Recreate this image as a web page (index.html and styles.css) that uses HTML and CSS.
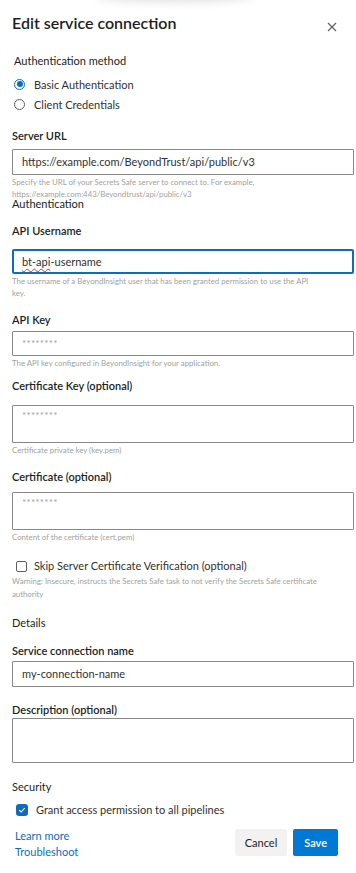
FILE: index.html
```html
<!DOCTYPE html>
<html lang="en">
<head>
    <meta charset="UTF-8">
    <meta name="viewport" content="width=device-width, initial-scale=1.0">
    <title>Edit service connection</title>
    <link rel="stylesheet" href="styles.css">
</head>
<body>
    <div class="shade"></div>
    <div class="panel">
        <div class="header">
            <h1>Edit service connection</h1>
            <span class="close" aria-label="Close">
                <svg width="10" height="10" viewBox="0 0 10 10"><path d="M1 1L9 9M9 1L1 9" stroke="#605e5c" stroke-width="1.1" fill="none"/></svg>
            </span>
        </div>

        <div class="method">
            <div class="method-title">Authentication method</div>
            <label class="radio-row"><span class="radio checked"></span>Basic Authentication</label>
            <label class="radio-row"><span class="radio"></span>Client Credentials</label>
        </div>

        <div class="field field-url">
            <div class="label">Server URL</div>
            <div class="input">https://example.com/BeyondTrust/api/public/v3</div>
            <div class="help">Specify the URL of your Secrets Safe server to connect to. For example,<br>https://example.com:443/Beyondtrust/api/public/v3</div>
        </div>
        <div class="group-title tight">Authentication</div>

        <div class="field field-user">
            <div class="label">API Username</div>
            <div class="input focused"><span class="spell">bt-api</span>-username</div>
            <div class="help">The username of a BeyondInsight user that has been granted permission to use the API<br>key.</div>
        </div>

        <div class="field field-key">
            <div class="label">API Key</div>
            <div class="input short placeholder">********</div>
            <div class="help">The API key configured in BeyondInsight for your application.</div>
        </div>

        <div class="field field-certkey">
            <div class="label">Certificate Key (optional)</div>
            <div class="textarea placeholder">********</div>
            <div class="help">Certificate private key (key.pem)</div>
        </div>

        <div class="field field-cert">
            <div class="label">Certificate (optional)</div>
            <div class="textarea placeholder">********</div>
            <div class="help">Content of the certificate (cert.pem)</div>
        </div>

        <div class="check-field">
            <label class="check-row"><span class="checkbox"></span>Skip Server Certificate Verification (optional)</label>
            <div class="help">Warning: Insecure, instructs the Secrets Safe task to not verify the Secrets Safe certificate<br>authority</div>
        </div>

        <div class="group-title details">Details</div>

        <div class="field field-name">
            <div class="label">Service connection name</div>
            <div class="input">my-connection-name</div>
        </div>

        <div class="field field-desc">
            <div class="label">Description (optional)</div>
            <div class="textarea tall"></div>
        </div>

        <div class="group-title security">Security</div>
        <label class="check-row grant">
            <span class="checkbox checked">
                <svg width="8" height="8" viewBox="0 0 8 8"><path d="M1.2 4.2L3.1 6L6.8 2" stroke="#fff" stroke-width="1.1" fill="none"/></svg>
            </span>
            Grant access permission to all pipelines
        </label>

        <div class="footer">
            <div class="links">
                <a href="#">Learn more</a>
                <a href="#">Troubleshoot</a>
            </div>
            <div class="buttons">
                <button class="btn">Cancel</button>
                <button class="btn primary">Save</button>
            </div>
        </div>
    </div>
</body>
</html>
```

FILE: styles.css
```css
body {
    margin: 0;
    background: #fff;
    font-family: 'Segoe UI', Lato, sans-serif;
    color: #201f1e;
    font-size: 11px;
    overflow: hidden;
}

/* faint shadow of the element above the panel */
.shade {
    position: absolute;
    top: -12px;
    left: 95px;
    width: 160px;
    height: 12px;
    border-radius: 50%;
    box-shadow: 0 2px 10px rgba(0, 0, 0, 0.12);
}

.panel {
    width: 342px;
    padding: 12px 0 0 12px;
}

.header {
    display: flex;
    justify-content: space-between;
    align-items: flex-start;
}

h1 {
    margin: 0;
    font-size: 16px;
    font-weight: 600;
    line-height: 22px;
}

.close {
    display: flex;
    margin: 10px 17px 0 0;
}

.method {
    margin: 19px 0 0 2px;
}

.method-title {
    font-size: 11px;
    line-height: 16px;
    margin-bottom: 5px;
}

.radio-row {
    display: flex;
    align-items: center;
    height: 20px;
    font-size: 11px;
    color: #323130;
}

.radio {
    width: 11px;
    height: 11px;
    box-sizing: border-box;
    border: 1px solid #605e5c;
    border-radius: 50%;
    margin: 0 9px 0 0;
    position: relative;
}

.radio.checked {
    border-color: #0f6cbd;
}

.radio.checked::after {
    content: '';
    position: absolute;
    left: 1.5px;
    top: 1.5px;
    width: 6px;
    height: 6px;
    border-radius: 50%;
    background: #0f6cbd;
}

.label {
    font-size: 11px;
    font-weight: 600;
    line-height: 16px;
    margin-bottom: 5px;
}

.field-url { margin-top: 14px; }
.field-user { margin-top: 12px; }
.field-key { margin-top: 13px; }
.field-certkey { margin-top: 9px; }
.field-cert { margin-top: 13px; }
.field-name { margin-top: 12px; }
.field-desc { margin-top: 15px; }

.field-user .label { margin-bottom: 10px; }
.field-key .label { margin-bottom: 3px; }
.field-certkey .label { margin-bottom: 11px; }
.field-cert .label { margin-bottom: 7px; }
.field-name .label { margin-bottom: 2px; }
.field-desc .label { margin-bottom: 0; }

.input,
.textarea {
    box-sizing: border-box;
    border: 1px solid #8a8886;
    border-radius: 1px;
    padding: 0 9px;
    font-size: 11px;
    color: #323130;
}

.input {
    height: 26px;
    line-height: 24px;
}

.input.short {
    height: 25px;
    line-height: 23px;
}

.input.focused {
    height: 25px;
    border: 2px solid #0f6cbd;
    border-radius: 2px;
    padding: 0 8px;
    line-height: 21px;
}

.spell {
    text-decoration: underline wavy #e0301e;
    text-decoration-thickness: 1px;
    text-underline-offset: 2px;
}

.textarea {
    height: 38px;
    padding-top: 3px;
}

.textarea.tall {
    height: 45px;
}

.placeholder {
    color: #a19f9d;
    font-size: 10px;
    letter-spacing: 0.2px;
}

.help {
    font-size: 7.8px;
    line-height: 12px;
    color: #a19f9d;
    margin-top: 1px;
}

.group-title {
    font-size: 11px;
    line-height: 16px;
}

.group-title.tight {
    line-height: 14px;
    margin-top: -3px;
}

.check-field {
    margin-top: 14px;
}

.check-row {
    display: flex;
    align-items: center;
    font-size: 11px;
    line-height: 18px;
    color: #323130;
}

.checkbox {
    width: 11px;
    height: 11px;
    box-sizing: border-box;
    border: 1px solid #605e5c;
    border-radius: 2px;
    margin: 0 7px 0 4px;
    display: flex;
    align-items: center;
    justify-content: center;
}

.checkbox.checked {
    width: 12px;
    height: 12px;
    border: none;
    background: #0f6cbd;
    border-radius: 3px;
    margin-right: 8px;
}

.check-field .help {
    line-height: 13px;
    margin-top: 0;
}

.group-title.details {
    margin-top: 14px;
}

.group-title.security {
    margin-top: 16px;
}

.grant {
    margin-top: 6px;
}

.footer {
    display: flex;
    justify-content: space-between;
    align-items: flex-start;
    margin-top: 9px;
    padding-right: 16px;
}

.links {
    display: flex;
    flex-direction: column;
    padding-left: 3px;
}

.links a {
    color: #0f6cbd;
    text-decoration: none;
    font-size: 11px;
    line-height: 16px;
}

.buttons {
    display: flex;
    gap: 6px;
    margin-top: 1px;
}

.btn {
    border: none;
    border-radius: 2px;
    height: 27px;
    padding: 0 10px;
    font-family: inherit;
    font-size: 11px;
    background: #f3f2f1;
    color: #201f1e;
}

.btn.primary {
    background: #0078d4;
    color: #fff;
    font-weight: 600;
    padding: 0 11px;
}
```
